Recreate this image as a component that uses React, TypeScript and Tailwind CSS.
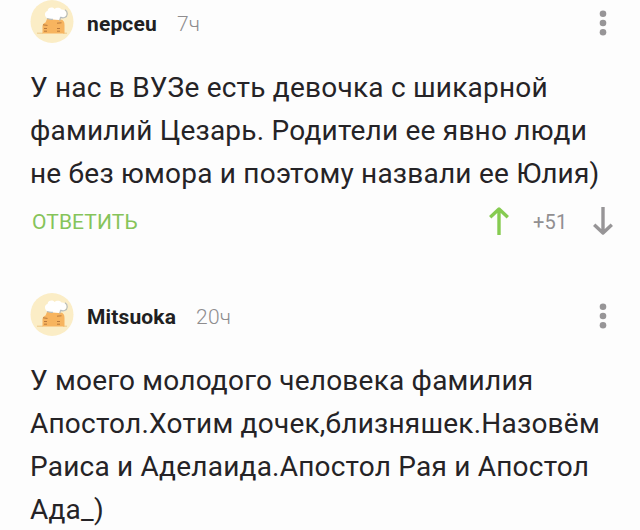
type Comment = {
  author: string;
  time: string;
  lines: string[];
  rating?: string;
};

const COMMENTS: Comment[] = [
  {
    author: "nepceu",
    time: "7ч",
    lines: [
      "У нас в ВУЗе есть девочка с шикарной",
      "фамилий Цезарь. Родители ее явно люди",
      "не без юмора и поэтому назвали ее Юлия)",
    ],
    rating: "+51",
  },
  {
    author: "Mitsuoka",
    time: "20ч",
    lines: [
      "У моего молодого человека фамилия",
      "Апостол.Хотим дочек,близняшек.Назовём",
      "Раиса и Аделаида.Апостол Рая и Апостол",
      "Ада_)",
    ],
  },
];

function Avatar() {
  return (
    <svg viewBox="0 0 44 44" className="size-11 shrink-0" aria-hidden="true">
      <circle cx="22" cy="21.500" r="21.500" fill="#fbedc6" />
      <path d="M7 33.200h6M33 33.200h4" stroke="#ecc98a" strokeWidth="1" />
      <path
        d="M12.500 33.500V26c.3-2 1.500-3 3-3.500l1.500-3.500 13.500.6c3 .4 4 2.400 4 5.300v8.600z"
        fill="#f7b45f"
      />
      <path
        d="M18.500 18.300c-4.200-.6-4.800-6.400-1-7.400.4-3.600 5-4.400 7-2 2-1.800 6-1.400 7 .6 4.600-.6 6.600 4.600 3.200 7.400-1.400 1.200-3 1.200-4 .6l-1.400 2.400-9-.6z"
        fill="#ffffff"
      />
      <path
        d="M35 9.800c3.200 2 3 6.400-.4 7.800-1.600.6-3.200.2-4.200-.6M30.500 17.500l-.8 3.200M17 18.600c2 .8 4 .9 6 .7"
        fill="none"
        stroke="#b4bbbd"
        strokeWidth="1.100"
      />
      <path
        d="M13 24.800l4.500.6M27 23.200l4.500-.4M14 28.500h3M14 31.200h3M27 28.500h3M27 31.200h3"
        stroke="#b9793c"
        strokeWidth="1"
      />
    </svg>
  );
}

function MoreIcon() {
  return (
    <svg viewBox="0 0 8 26" className="h-[26px] w-2" fill="#979597">
      <circle cx="4" cy="3.700" r="3.300" />
      <circle cx="4" cy="13" r="3.300" />
      <circle cx="4" cy="22.300" r="3.300" />
    </svg>
  );
}

function ArrowIcon({ className }: { className: string }) {
  return (
    <svg
      viewBox="0 0 20 28"
      className={className}
      fill="none"
      stroke="currentColor"
      strokeWidth="3.400"
      strokeLinejoin="round"
    >
      <path d="M10 28V2.500M1.200 10.300L10 2l8.800 8.300" />
    </svg>
  );
}

function CommentHeader({ author, time }: { author: string; time: string }) {
  return (
    <header className="flex h-11 items-center pr-[33px] pl-[30px]">
      <Avatar />
      <span className="ml-[13px] pt-[3px] text-[21px] leading-11 font-bold tracking-[0.15px] text-[#211f22]">
        {author}
      </span>
      <span className="ml-[20px] pt-[3px] text-[21px] leading-11 font-light tracking-[0.2px] text-[#8f8d8f]">
        {time}
      </span>
      <button type="button" aria-label="Меню" className="ml-auto pt-px">
        <MoreIcon />
      </button>
    </header>
  );
}

function CommentActions({ rating }: { rating: string }) {
  return (
    <footer className="mt-[4px] flex h-[44px] items-center pr-[27px] pl-8">
      <button
        type="button"
        className="pt-[3px] text-[21px] tracking-[0.1px] text-[#86c45a]"
      >
        ОТВЕТИТЬ
      </button>
      <div className="ml-auto flex items-center">
        <ArrowIcon className="h-7 w-5 text-[#86cb51]" />
        <span className="ml-[24px] w-[60px] pt-px text-[20px] tracking-[0.2px] text-[#918f91]">
          {rating}
        </span>
        <ArrowIcon className="h-7 w-5 rotate-180 text-[#979597]" />
      </div>
    </footer>
  );
}

export default function App() {
  return (
    <main className="flex h-[530px] w-[640px] flex-col gap-[50px] overflow-hidden bg-[#fdfdfd] font-['Roboto',sans-serif]">
      {COMMENTS.map((comment) => (
        <article key={comment.author}>
          <CommentHeader author={comment.author} time={comment.time} />
          <div className="mt-[23px] pl-[30px] text-[28px] leading-[42.8px] tracking-[0.22px] whitespace-nowrap text-[#252326]">
            {comment.lines.map((line) => (
              <p key={line}>{line}</p>
            ))}
          </div>
          {comment.rating ? <CommentActions rating={comment.rating} /> : null}
        </article>
      ))}
    </main>
  );
}
